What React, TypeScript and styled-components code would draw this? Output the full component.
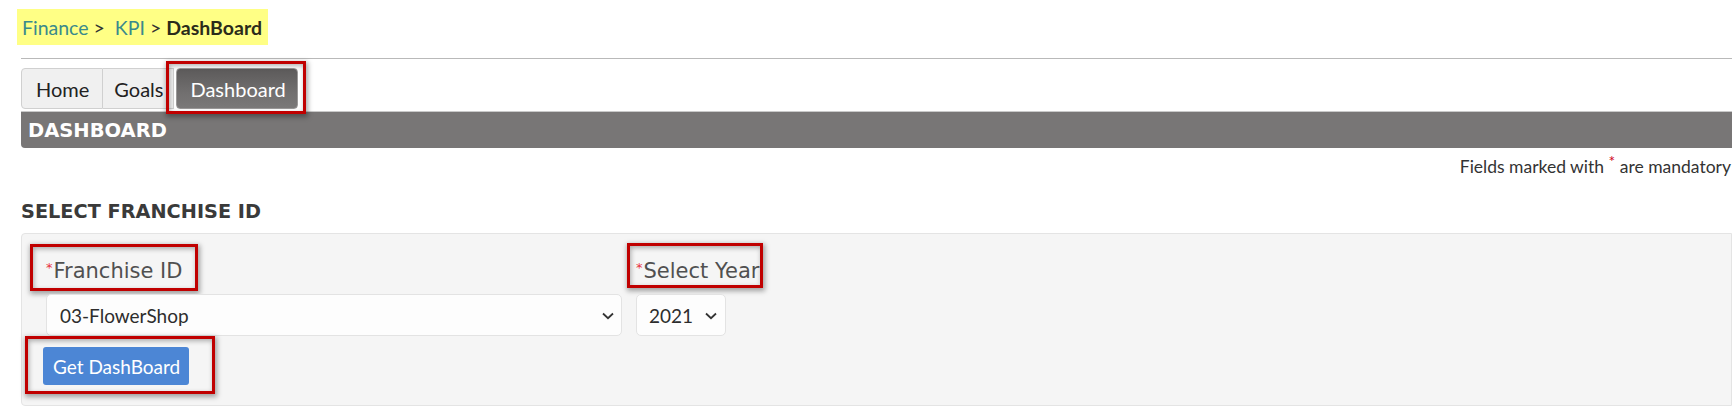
import styled, { createGlobalStyle, css } from 'styled-components';

const GlobalStyle = createGlobalStyle`
  body {
    margin: 0;
    background: #ffffff;
    font-family: Lato, 'Open Sans', sans-serif;
    color: #333333;
  }
`;

// red annotation frame drawn over an element
const marked = css<{ $t: number; $r: number; $b: number; $l: number }>`
  position: relative;
  &::after {
    content: '';
    position: absolute;
    top: ${(p) => -p.$t}px;
    right: ${(p) => -p.$r}px;
    bottom: ${(p) => -p.$b}px;
    left: ${(p) => -p.$l}px;
    border: 3px solid #c00000;
    box-shadow: 1px 2px 5px 1px rgba(0, 0, 0, 0.35), inset 1px 2px 5px rgba(0, 0, 0, 0.3);
    pointer-events: none;
  }
`;

const Page = styled.div`
  padding-top: 9px;
`;

const Crumbs = styled.div`
  display: inline-flex;
  align-items: center;
  margin-left: 17px;
  height: 36px;
  padding: 0 6px 0 5px;
  background: #ffff85;
  font-size: 19.5px;
  white-space: pre;
`;

const CrumbLink = styled.span`
  color: #3a8a8c;
`;

const CrumbSep = styled.span`
  color: #333;
`;

const CrumbCurrent = styled.b`
  color: #2b2b1a;
  font-weight: 700;
`;

const Main = styled.div`
  margin-left: 21px;
`;

const Rule = styled.div`
  margin-top: 13px;
  height: 1px;
  background: #b9b9b9;
`;

const Tabs = styled.div`
  display: flex;
  margin-top: 9px;
  height: 41px;
`;

const Tab = styled.div<{ $first?: boolean }>`
  display: flex;
  align-items: center;
  padding: ${(p) => (p.$first ? '0 13px 0 14px' : '0 10px 0 11px')};
  background: #f0f0f0;
  border: 1px solid #d0d0d0;
  border-left-width: ${(p) => (p.$first ? '1px' : '0')};
  border-radius: ${(p) => (p.$first ? '4px 0 0 4px' : '0')};
  font-size: 20px;
  color: #222;
`;

const ActiveTab = styled.div<{ $t: number; $r: number; $b: number; $l: number }>`
  ${marked};
  display: flex;
  align-items: center;
  margin-left: 2px;
  padding: 0 12px 0 13px;
  width: 122px;
  box-sizing: border-box;
  background: linear-gradient(#5c5a5a, #716f6f 60%, #7a7878);
  border: 1px solid #9a9898;
  border-radius: 4px;
  font-size: 20px;
  color: #ffffff;
`;

const HeaderBar = styled.div`
  margin-top: 2px;
  height: 37px;
  box-sizing: border-box;
  display: flex;
  align-items: center;
  padding-left: 7px;
  background: #787676;
  border-top: 1px solid #c9c9c9;
  border-bottom-left-radius: 4px;
  font-family: 'DejaVu Sans', sans-serif;
  font-weight: 700;
  font-size: 19.5px;
  color: #ffffff;
`;

const Note = styled.div`
  margin-top: 3px;
  text-align: right;
  padding-right: 1px;
  font-size: 17.5px;
  color: #333;
`;

const Star = styled.span`
  color: #d0021b;
  font-size: 0.9em;
  vertical-align: 0.4em;
`;

const SectionTitle = styled.h2`
  margin: 23px 0 0;
  font-family: 'DejaVu Sans', sans-serif;
  font-weight: 700;
  font-size: 19.3px;
  color: #3a3a3a;
  line-height: 24px;
`;

const Panel = styled.div`
  margin-top: 9px;
  height: 173px;
  box-sizing: border-box;
  padding: 20px 0 0 24px;
  background: #f5f5f5;
  border: 1px solid #e4e4e4;
  border-radius: 4px 0 0 4px;
`;

const Fields = styled.div`
  display: flex;
  align-items: flex-start;
  gap: 14px;
`;

const Field = styled.div<{ $w: number }>`
  display: flex;
  flex-direction: column;
  width: ${(p) => p.$w}px;
`;

const Label = styled.label<{ $t: number; $r: number; $b: number; $l: number }>`
  ${marked};
  align-self: flex-start;
  white-space: nowrap;
  font-family: 'DejaVu Sans', sans-serif;
  font-size: 21px;
  line-height: 28px;
  color: #505050;
`;

const LabelStar = styled.span`
  color: #e8323e;
  font-size: 13px;
  vertical-align: 6px;
  margin-right: 1px;
`;

const SelectWrap = styled.div`
  position: relative;
  margin-top: 9px;
  height: 42px;
`;

const Select = styled.select<{ $pl: number }>`
  appearance: none;
  width: 100%;
  height: 100%;
  box-sizing: border-box;
  padding: 0 28px 0 ${(p) => p.$pl}px;
  background: #fdfdfd;
  border: 1px solid #e3e3e3;
  border-radius: 5px;
  font-family: Lato, sans-serif;
  font-size: 19px;
  color: #2d2d2d;
  outline: none;
`;

const Chevron = styled.svg<{ $right: number }>`
  position: absolute;
  top: 18px;
  right: ${(p) => p.$right}px;
  pointer-events: none;
`;

const ButtonRow = styled.div`
  margin-top: 11px;
`;

const Button = styled.button<{ $t: number; $r: number; $b: number; $l: number }>`
  ${marked};
  margin-left: -3px;
  height: 38px;
  padding: 0 9px 0 10px;
  background: #4c86d5;
  border: none;
  border-radius: 3px;
  font-family: Lato, sans-serif;
  font-size: 19px;
  color: #ffffff;
`;

function Arrow({ right }: { right: number }) {
  return (
    <Chevron $right={right} width="12" height="8" viewBox="0 0 12 8">
      <path d="M1 1.5 L6 6.2 L11 1.5" fill="none" stroke="#333" strokeWidth="1.8" />
    </Chevron>
  );
}

export default function App() {
  return (
    <>
      <GlobalStyle />
      <Page>
        <Crumbs>
          <CrumbLink>Finance</CrumbLink>
          <CrumbSep> {'>'}  </CrumbSep>
          <CrumbLink>KPI</CrumbLink>
          <CrumbSep> {'>'} </CrumbSep>
          <CrumbCurrent>DashBoard</CrumbCurrent>
        </Crumbs>
        <Main>
          <Rule />
          <Tabs>
            <Tab $first>Home</Tab>
            <Tab>Goals</Tab>
            <ActiveTab $t={8} $r={9} $b={6} $l={11}>Dashboard</ActiveTab>
          </Tabs>
          <HeaderBar>DASHBOARD</HeaderBar>
          <Note>
            Fields marked with <Star>*</Star> are mandatory
          </Note>
          <SectionTitle>SELECT FRANCHISE ID</SectionTitle>
          <Panel>
            <Fields>
              <Field $w={576}>
                <Label $t={10} $r={16} $b={6} $l={16}>
                  <LabelStar>*</LabelStar>Franchise ID
                </Label>
                <SelectWrap>
                  <Select $pl={13} defaultValue="03">
                    <option value="03">03-FlowerShop</option>
                  </Select>
                  <Arrow right={8} />
                </SelectWrap>
              </Field>
              <Field $w={90}>
                <Label $t={11} $r={4} $b={3} $l={9}>
                  <LabelStar>*</LabelStar>Select Year
                </Label>
                <SelectWrap>
                  <Select $pl={12} defaultValue="2021">
                    <option value="2021">2021</option>
                  </Select>
                  <Arrow right={9} />
                </SelectWrap>
              </Field>
            </Fields>
            <ButtonRow>
              <Button $t={11} $r={26} $b={9} $l={18}>Get DashBoard</Button>
            </ButtonRow>
          </Panel>
        </Main>
      </Page>
    </>
  );
}
